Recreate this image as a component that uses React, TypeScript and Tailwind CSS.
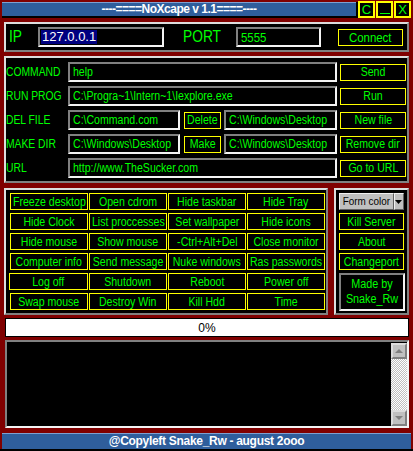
import React from 'react';

const raised =
  'border-2 border-t-[#dcdcdc] border-l-[#dcdcdc] border-r-[#808080] border-b-[#808080]';
const raisedThin =
  'border border-t-[#f0f0f0] border-l-[#f0f0f0] border-r-[#606060] border-b-[#606060]';
const sunken =
  'border-2 border-t-[#808080] border-l-[#808080] border-r-[#f4f4f4] border-b-[#f4f4f4]';

function YButton({
  label,
  className = ''
}: {
  label: string;
  className?: string;
}) {
  return (
    <div
      className={`flex h-[17px] shrink-0 items-center justify-center border border-[#ffff00] bg-black text-[12px] leading-none text-[#00ff00] ${className}`}
    >
      <span className="inline-block scale-x-[0.88] whitespace-nowrap">{label}</span>
    </div>
  );
}

function Field({
  value,
  className = ''
}: {
  value: string;
  className?: string;
}) {
  return (
    <div
      className={`flex h-[20px] shrink-0 items-center overflow-hidden bg-black pl-[3px] text-[12px] leading-none text-[#00ff00] ${sunken} ${className}`}
    >
      <span className="inline-block origin-left scale-x-[0.88] whitespace-nowrap">{value}</span>
    </div>
  );
}

const gridButtons = [
  'Freeze desktop',
  'Open cdrom',
  'Hide taskbar',
  'Hide Tray',
  'Hide Clock',
  'List proccesses',
  'Set wallpaper',
  'Hide icons',
  'Hide mouse',
  'Show mouse',
  '-Ctrl+Alt+Del',
  'Close monitor',
  'Computer info',
  'Send message',
  'Nuke windows',
  'Ras passwords',
  'Log off',
  'Shutdown',
  'Reboot',
  'Power off',
  'Swap mouse',
  'Destroy Win',
  'Kill Hdd',
  'Time'
];

export default function App() {
  return (
    <div className="flex h-[451px] w-[413px] flex-col overflow-hidden bg-[#800000] font-['Liberation_Sans',Arial,sans-serif]">
      {/* title bar */}
      <div className="flex h-[20px] shrink-0">
        <div className="mt-[2px] ml-[2px] box-content flex h-[14px] w-[354px] items-center justify-center border-r-2 border-b-2 border-black bg-[#2f5e9c] text-[12px] font-bold tracking-[-0.5px] text-white shadow-[inset_0_1px_0_#7fa0d0]">
          ----====NoXcape v 1.1====----
        </div>
        <div className="mt-[1px] flex gap-[1px]">
          {['C', '_', 'X'].map((c) => (
            <div
              key={c}
              className="flex h-[17px] w-[17px] items-center justify-center border-2 border-[#ffff00] bg-black text-[13px] leading-none text-[#00ff00]"
            >
              {c === '_' ? <span className="mt-[8px] h-[1px] w-[10px] bg-[#00ff00]" /> : c}
            </div>
          ))}
        </div>
      </div>

      {/* ip row */}
      <div className={`mt-[2px] ml-[4px] flex h-[30px] w-[405px] shrink-0 items-center bg-black ${raised}`}>
        <span className="ml-[3px] w-[29px] text-[16px] leading-none text-[#00ff00]">
          <span className="inline-block origin-left scale-x-[0.86]">IP</span>
        </span>
        <div className={`flex h-[20px] w-[126px] items-center bg-black pl-[1px] ${sunken}`}>
          <span className="bg-[#000080] px-[1px] text-[13px] leading-[14px] text-white">127.0.0.1</span>
        </div>
        <span className="ml-[19px] w-[53px] text-[16px] leading-none text-[#00ff00]">
          <span className="inline-block origin-left scale-x-[0.86]">PORT</span>
        </span>
        <Field value="5555" className="w-[85px] text-[13px]" />
        <YButton label="Connect" className="ml-[17px] w-[65px] text-[13px]" />
      </div>

      {/* command panel */}
      <div className={`mt-[4px] ml-[4px] flex h-[127px] w-[405px] shrink-0 bg-black ${raised}`}>
        <div className="flex w-[62px] flex-col gap-[4px] pt-[4px] text-[12px] leading-none text-[#00ff00]">
          {['COMMAND', 'RUN PROG', 'DEL FILE', 'MAKE DIR', 'URL'].map((l) => (
            <div key={l} className="flex h-[20px] items-center">
              <span className="inline-block origin-left scale-x-[0.86] whitespace-nowrap">{l}</span>
            </div>
          ))}
        </div>
        <div className="flex flex-col gap-[4px] pt-[4px]">
          <div className="flex h-[20px] items-center gap-[3px]">
            <Field value="help" className="w-[269px]" />
            <YButton label="Send" className="w-[66px]" />
          </div>
          <div className="flex h-[20px] items-center gap-[3px]">
            <Field value="C:\Progra~1\Intern~1\Iexplore.exe" className="w-[269px]" />
            <YButton label="Run" className="w-[66px]" />
          </div>
          <div className="flex h-[20px] items-center gap-[3px]">
            <Field value="C:\Command.com" className="w-[112px]" />
            <YButton label="Delete" className="ml-[1px] w-[37px]" />
            <Field value="C:\Windows\Desktop" className="w-[113px]" />
            <YButton label="New file" className="w-[66px]" />
          </div>
          <div className="flex h-[20px] items-center gap-[3px]">
            <Field value="C:\Windows\Desktop" className="w-[112px]" />
            <YButton label="Make" className="ml-[1px] w-[37px]" />
            <Field value="C:\Windows\Desktop" className="w-[113px]" />
            <YButton label="Remove dir" className="w-[66px]" />
          </div>
          <div className="flex h-[20px] items-center gap-[3px]">
            <Field value="http://www.TheSucker.com" className="w-[269px]" />
            <YButton label="Go to URL" className="w-[66px]" />
          </div>
        </div>
      </div>

      {/* buttons */}
      <div className="mt-[5px] ml-[4px] flex h-[127px] shrink-0 gap-[6px]">
        <div className={`w-[324px] bg-black pt-[3px] pl-[4px] ${raised}`}>
          <div className="grid grid-cols-[78px_78px_78px_78px] gap-x-[1px] gap-y-[3px]">
            {gridButtons.map((b) => (
              <YButton key={b} label={b} className={b === 'Log off' ? '-ml-[1px]' : ''} />
            ))}
          </div>
        </div>
        <div className={`flex w-[75px] flex-col gap-[3px] bg-black pt-[3px] pl-[3px] ${raised}`}>
          <div className="flex h-[17px] w-[65px]">
            <div className={`flex flex-1 items-center justify-center bg-[#c0c0c0] text-[11px] leading-none text-black ${raisedThin}`}>
              <span className="inline-block scale-x-[0.9] whitespace-nowrap">Form color</span>
            </div>
            <div className={`flex w-[14px] items-center justify-center bg-[#c0c0c0] ${raisedThin}`}>
              <svg width="7" height="4" viewBox="0 0 7 4">
                <path d="M0 0h7L3.5 4z" fill="#000" />
              </svg>
            </div>
          </div>
          <YButton label="Kill Server" className="w-[65px]" />
          <YButton label="About" className="w-[65px]" />
          <YButton label="Changeport" className="w-[65px]" />
          <div
            className={`flex h-[38px] w-[66px] flex-col items-center justify-center bg-black text-[12px] leading-[15px] text-[#00ff00] ${sunken}`}
          >
            <span className="inline-block scale-x-[0.9] whitespace-nowrap">Made by</span>
            <span className="inline-block scale-x-[0.9] whitespace-nowrap">Snake_Rw</span>
          </div>
        </div>
      </div>

      {/* progress */}
      <div className="mt-[3px] ml-[5px] flex h-[19px] w-[404px] shrink-0 items-center justify-center border border-black bg-white text-[12px] leading-none text-black">
        0%
      </div>

      {/* log box */}
      <div className={`mt-[3px] ml-[5px] flex h-[88px] w-[404px] shrink-0 justify-end bg-black pt-[1px] ${sunken}`}>
        <div className="flex w-[16px] flex-col">
          <div className={`flex h-[16px] items-center justify-center bg-[#c0c0c0] ${raised}`}>
            <svg width="8" height="4" viewBox="0 0 8 4">
              <path d="M4 0L8 4H0z" fill="#808080" />
            </svg>
          </div>
          <div className="flex-1 bg-[repeating-conic-gradient(#c0c0c0_0_25%,#ffffff_0_50%)] bg-[length:2px_2px]" />
          <div className={`flex h-[16px] items-center justify-center bg-[#c0c0c0] ${raised}`}>
            <svg width="8" height="4" viewBox="0 0 8 4">
              <path d="M0 0H8L4 4z" fill="#808080" />
            </svg>
          </div>
        </div>
      </div>

      {/* footer */}
      <div className="mt-[5px] ml-[2px] flex h-[16px] w-[409px] shrink-0 items-center justify-center bg-[#2f5e9c] text-[12px] font-bold leading-none tracking-[-0.3px] text-white shadow-[inset_0_1px_0_#7fa0d0]">
        @Copyleft Snake_Rw - august 2ooo
      </div>
      <div className="flex-1 bg-black" />
    </div>
  );
}
